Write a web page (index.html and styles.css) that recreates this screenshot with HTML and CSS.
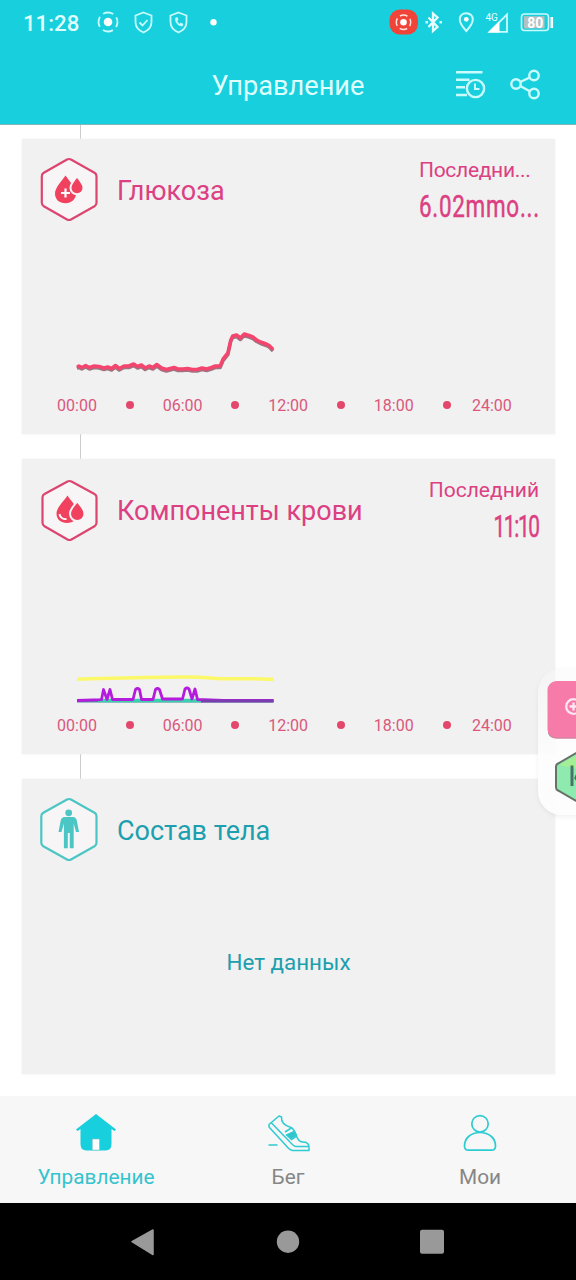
FILE: index.html
```html
<!DOCTYPE html>
<html lang="ru">
<head>
<meta charset="utf-8">
<title>Управление</title>
<link rel="stylesheet" href="styles.css">
</head>
<body>
<div class="screen">
  <header class="top">
    <div class="status">
      <span class="clock">11:28</span>
      <svg class="status-left" width="124" height="28" viewBox="96 8 124 28" fill="none" stroke="#c9fbff" stroke-width="1.8">
        <circle cx="108" cy="22" r="9.5" stroke-dasharray="10.500 4.420" stroke-dashoffset="5.250"/>
        <circle cx="108" cy="22" r="4.3" fill="#fff" stroke="none"/>
        <path d="M143.500 12.500 151.500 15.500V22c0 5-3.500 8.500-8 10.500-4.500-2-8-5.500-8-10.500V15.500Z"/>
        <path d="m139.500 22.500 3 3 5-5.500"/>
        <path d="M178.500 12.500 186.500 15.500V22c0 5-3.500 8.500-8 10.500-4.500-2-8-5.500-8-10.500V15.500Z"/>
        <path d="M175.500 18c-.5 4.500 2.500 8 7 8l.5-2-2.300-1-1.300 1c-1.300-.8-2-2-2.300-3.200l1-1-.7-2.300Z" fill="#c9fbff" stroke-width=".6"/>
        <circle cx="213.500" cy="22.300" r="3.200" fill="#fff" stroke="none"/>
      </svg>
      <svg class="status-right" width="170" height="32" viewBox="386 6 170 32" fill="none" stroke="#c9fbff" stroke-width="2">
        <rect x="389.500" y="9.500" width="28.500" height="25" rx="10.500" fill="#f04438" stroke="none"/>
        <circle cx="403.500" cy="22.300" r="7.200" stroke="#ffe4df" stroke-width="1.500" stroke-dasharray="7.800 3.510" stroke-dashoffset="3.900"/>
        <circle cx="403.500" cy="22.300" r="3.300" fill="#fff" stroke="none"/>
        <path d="m428.500 17.500 9 9.500-4.500 4V13.500l4.500 4-9 9.500" stroke="#e9ffff" stroke-width="2.300"/>
        <path d="M425.500 22.300h2.500M439.500 22.300h2.500" stroke-width="2.500"/>
        <path d="M466.300 13.200c-4 0-6.500 2.800-6.500 6.300 0 4.500 6.500 11.500 6.500 11.500s6.500-7 6.500-11.500c0-3.500-2.500-6.300-6.500-6.300Z"/>
        <circle cx="466.300" cy="19.300" r="2.400" fill="#fff" stroke="none"/>
        <path d="M489.500 31.800 507 14.500V31.800Z" stroke-width="1.800"/>
        <path d="M488 32.500 499.500 21V32.500Z" fill="#fff" stroke="none"/>
        <text class="net" x="485.500" y="20.500">4G</text>
        <rect x="521.500" y="14" width="27" height="16.500" rx="3" stroke-width="1.600"/>
        <rect x="524" y="16.200" width="20.500" height="12.200" fill="#b3c1c4" stroke="none"/>
        <path d="M551.800 17v11" stroke="#fff" stroke-width="2.600"/>
        <text class="battery" x="535.300" y="28.200">80</text>
      </svg>
    </div>
    <div class="appbar">
      <h1>Управление</h1>
      <svg class="appbar-icons" width="88" height="34" viewBox="454 68 88 34" fill="none" stroke="#c9fbff" stroke-width="2.400">
        <path d="M456 72.200h26.500M456 79.800h13.500M456 87.300h9M456 95h11"/>
        <circle cx="475.500" cy="88.500" r="8.600"/>
        <path d="M475 83.500v5.500h4.500" stroke-width="2"/>
        <circle cx="516" cy="84" r="4.700"/><circle cx="534" cy="75.500" r="4.700"/><circle cx="534" cy="93.500" r="4.700"/>
        <path d="m520.200 82 9.600-4.500M520.200 86l9.600 5.300"/>
      </svg>
    </div>
  </header>

  <main class="feed">
    <section class="card pink">
      <div class="card-head">
        <svg class="badge" width="60" height="66" viewBox="39 156 60 66">
          <path class="hex" d="M67 159.500q2-1 4 0l23.500 13.200q2 1.200 2 3.500v26.600q0 2.300-2 3.500L71 219.500q-2 1-4 0L43.800 206.300q-2-1.200-2-3.500V176.200q0-2.300 2-3.500Z"/>
          <path class="fill" d="M65.500 175.500c-3.500 5.500-10.500 12-10.500 18 0 6 4.500 9.800 10.500 9.800s10.500-4.500 10.500-9.800c0-6-7-12.500-10.500-18Z"/>
          <path class="fill outlined" d="M77 176c-2 3.500-6.500 7.500-6.500 11.800 0 4 3 6.500 6.500 6.500s6.500-2.500 6.500-6.500c0-4.300-4.500-8.300-6.500-11.800Z"/>
          <path d="M65.500 188.500v9M61 193h9" stroke="#fff" stroke-width="2.200"/>
        </svg>
        <h2>Глюкоза</h2>
        <div class="last start"><span class="last-label">Последни...</span><span class="last-value">6.02mmo...</span></div>
      </div>
      <svg class="chart" width="533" height="120" viewBox="22 270 533 120">
        <g transform="translate(77 0) scale(.961 1) translate(-77 0)">
        <path class="line shade" d="M77 368.500l2-1 3 1.500 4-2 4 2 5-1.500 5 .5 5 1.500 4-1 4 1.500 4-3 4 3 5-2.500 5 0 5-2 4 2.500 4-1.500 4 3 4-2 4 1.500 4-3 5 3.500 5 1.500 4-1 4-1 4 1.500 5 0 5-.5 5 1 5 0 5-1.500 5 1 5-1.500 4-1.500 5 0 3-7 5-6 3-13 2-4 4-1 4 3 4-4 5 1.500 4 1.500 4 3 4 2 6 2 3 1.500 4 4"/>
        <path class="line" d="M77 367l2-1 3 1.500 4-2 4 2 5-1.500 5 .5 5 1.500 4-1 4 1.500 4-3 4 3 5-2.500 5 0 5-2 4 2.500 4-1.500 4 3 4-2 4 1.500 4-3 5 3.500 5 1.500 4-1 4-1 4 1.500 5 0 5-.5 5 1 5 0 5-1.500 5 1 5-1.500 4-1.500 5 0 3-7 5-6 3-13 2-4 4-1 4 3 4-4 5 1.500 4 1.500 4 3 4 2 6 2 3 1.500 4 4"/>
        </g>
      </svg>
      <div class="axis"><span>00:00</span><i></i><span>06:00</span><i></i><span>12:00</span><i></i><span>18:00</span><i></i><span class="end">24:00</span></div>
    </section>

    <section class="card pink">
      <div class="card-head">
        <svg class="badge" width="60" height="66" viewBox="39 476 60 66">
          <path class="hex" d="M67.500 481.500q2-1 4 0L94.500 494q2 1 2 3.300v25.500q0 2.300-2 3.500L71.500 539.500q-2 1-4 0L44.500 526.300q-2-1.200-2-3.500V497.300q0-2.300 2-3.300Z"/>
          <path class="fill" d="M67.500 495.500c-3.500 5.500-11 12-11 18 0 6 4.500 9.500 10.500 9.500s11-3.500 11-9.500c0-6-7-12.500-10.500-18Z"/>
          <path class="fill outlined" d="M77.300 501c-2.300 4-7.300 7.500-7.300 12.500 0 4.500 3.300 7.500 7.300 7.500s7.200-3 7.200-7.500c0-5-4.900-8.500-7.200-12.500Z"/>
          <path d="M59.500 514c.5 3.500 3.500 5.500 7 5" fill="none" stroke="#fff" stroke-width="1.800"/>
        </svg>
        <h2>Компоненты крови</h2>
        <div class="last"><span class="last-label">Последний</span><span class="last-value time">11:10</span></div>
      </div>
      <svg class="chart" width="533" height="120" viewBox="22 590 533 120">
        <path d="M77 679.200c30-.5 70-2.200 110-2.200 20 0 30 2.300 50 1.800s25 .5 36.500.5" fill="none" stroke="#fbf86a" stroke-width="3.500"/>
        <path d="M77 701h196.500" stroke="#4b8b9c" stroke-width="3"/>
        <path d="M98 700.500h103" stroke="#3ccfae" stroke-width="3.500"/>
        <path d="M77 700.500l24.500-.8 2-10.200 3.500 10 3-10 2.500 10H133l2.500-10q2-2 4 0l2 10H153l2.500-10q2-2 4 0l3 9.500h20l2.500-10q2-2 4 0l3 10 3-10 2.500 10.500 26 1 50 0" fill="none" stroke="#b51bdc" stroke-width="2.800" stroke-linejoin="round"/>
        <path d="M201 701h72.500" stroke="#7a3fae" stroke-width="2.800"/>
      </svg>
      <div class="axis"><span>00:00</span><i></i><span>06:00</span><i></i><span>12:00</span><i></i><span>18:00</span><i></i><span class="end">24:00</span></div>
    </section>

    <section class="card teal">
      <div class="card-head">
        <svg class="badge" width="60" height="66" viewBox="39 796 60 66">
          <path class="hex" d="M67 799.500q2-1 4 0l23.500 13.200q2 1.200 2 3.500v26.600q0 2.300-2 3.500L71 859.500q-2 1-4 0L43.300 846.300q-2-1.200-2-3.500V816.200q0-2.300 2-3.500Z"/>
          <circle class="fill" cx="68.700" cy="812.800" r="3.400"/>
          <path class="fill" d="M64.500 817h8.500q3 0 3.800 3.500l2.200 11.500h-3l-2.300-8.500v24.800h-3.900V833h-2v15.300h-3.900V823.500L61.500 832h-3l2.200-11.500Q61.500 817 64.500 817Z"/>
        </svg>
        <h2>Состав тела</h2>
      </div>
      <p class="empty">Нет данных</p>
    </section>
  </main>

  <nav class="tabs">
    <div class="tab active">
      <svg width="48" height="44" viewBox="72 1110 48 44">
        <path d="m96 1114 20 15.500-1.500 1.500-3-2V1144q0 6.500-6 6.500h-19q-6 0-6-6.500v-15l-3 2-1.500-1.500Z" fill="#18cfdd"/>
        <path d="M92.300 1139h7.200v11h-7.200Z" fill="#fff" stroke="#7fbcc2" stroke-width=".6"/>
      </svg>
      <span>Управление</span>
    </div>
    <div class="tab">
      <svg width="48" height="44" viewBox="264 1110 48 44" fill="none" stroke="#2dcbd2" stroke-width="1.500" stroke-linejoin="round">
        <path d="m269 1124.500 10-8.500 2.500 1c-.5 5.500 2.500 8.500 9.500 10.500 2.500 1 3.500 3.500 4.500 6.500 1 2.800 3 8 7 8 4 0 6.500 1 6.500 5v3.500h-16.500c-3-.5-5-3-7-5.500L269 1127Z"/>
        <path d="m271 1122.500 18 18.500c3 3 4.500 5.500 7 5.500h12.500M285 1132l7-4.500M289 1136.500l5.500-5.500M291 1140l6-4M268.500 1145h9"/>
        <path d="m286.500 1135 8-3.500 2 3.500-5.500 4Z" fill="#35c4ca"/>
      </svg>
      <span>Бег</span>
    </div>
    <div class="tab">
      <svg width="48" height="44" viewBox="456 1110 48 44" fill="none" stroke="#2dcbd2" stroke-width="1.700">
        <circle cx="480" cy="1123.800" r="8.200"/>
        <path d="M480 1132.500c-9 0-15.500 5.500-15.500 13.500 0 3 1 4.200 4 4.200h23c3 0 4-1.200 4-4.200 0-8-6.500-13.500-15.500-13.500Z"/>
      </svg>
      <span>Мои</span>
    </div>
  </nav>

  <footer class="system">
    <svg width="26" height="28" viewBox="130 1228 26 28"><path d="M152 1230v24.500L131 1241.700Z" fill="#999" stroke="#999" stroke-width="1.500" stroke-linejoin="round"/></svg>
    <svg width="26" height="28" viewBox="275 1228 26 28"><circle cx="288" cy="1241.700" r="11.200" fill="#999"/></svg>
    <svg width="26" height="28" viewBox="419 1228 26 28"><rect x="420" y="1229.700" width="24" height="24" rx="2" fill="#999"/></svg>
  </footer>

  <aside class="float">
    <svg width="38" height="147" viewBox="538 668 38 147">
      <rect x="547.500" y="681" width="58" height="57.500" rx="9" fill="#f67ba8"/>
      <path d="M548.500 733q2 5 8 5H576" fill="none" stroke="#c58a9f" stroke-width="1.200"/>
      <g fill="none" stroke="#ffe6f0" stroke-width="2.300"><circle cx="573.500" cy="706.500" r="7.300"/><path d="M573.500 702.500v8M569.500 706.500h8"/></g>
      <path d="M556 766.500q0-2 2-3L578 752v50l-20-11.500q-2-1-2-3Z" fill="#8feab0" stroke="#687068" stroke-width="2"/>
      <path d="M559 765l17-9.500v13Z" fill="#a4ef95"/>
      <path d="M572 765.500v20.500" stroke="#467466" stroke-width="3"/>
      <path d="M577 774l-2 4 2 3" stroke="#467466" stroke-width="1.500" fill="none"/>
    </svg>
  </aside>
</div>
</body>
</html>
```
FILE: styles.css
```css
* { box-sizing: border-box; margin: 0; padding: 0; }
body { font-family: Roboto, "Noto Sans", sans-serif; background: #fff; }
svg { display: block; flex: none; }
.screen { position: relative; width: 576px; height: 1280px; overflow: hidden; display: flex; flex-direction: column; }

.top { height: 125px; background: #18cfdd; border-bottom: 1px solid #82b5bc; color: #dfffff; }
.status { height: 44px; display: flex; align-items: center; padding: 0 20px 0 23px; }
.clock { width: 73px; font-size: 22.200px; font-weight: 500; line-height: 44px; padding-top: 2px; }
.status-right { margin-left: auto; }
.net { font: 10px Roboto, sans-serif; fill: #e9ffff; stroke: none; }
.battery { font: 700 14px Roboto, sans-serif; fill: #fff; stroke: none; text-anchor: middle; }
.appbar { height: 80px; display: grid; grid-template-columns: 1fr 153px 1fr; align-items: center; padding-top: 2px; }
.appbar h1 { grid-column: 2; font-size: 27.200px; font-weight: 400; line-height: 32px; padding-top: 2px; white-space: nowrap; }
.appbar-icons { justify-self: end; margin-right: 34px; margin-top: -1px; }

.feed { height: 971px; padding: 14px 21px 0 22px; display: flex; flex-direction: column; gap: 25px;
  background: linear-gradient(#ccc, #ccc) 80px 0 / 1px 700px no-repeat #fff; }
.card { height: 295px; background: #f1f1f1; box-shadow: 0 0 2px #eee; display: flex; flex-direction: column; flex: none; }
.card-head { height: 100px; display: flex; align-items: flex-start; padding: 17px 16px 0 17px; }
.pink { color: #dc4082; }
.teal { color: #1c9fae; }
.badge .hex { fill: #f7f5f6; stroke: currentColor; stroke-width: 2.200; }
.pink .badge { color: #dc4570; }
.teal .badge { color: #4cc6c4; }
.fill { fill: #f0415f; }
.teal .fill { fill: #4cc6c4; }
.outlined { stroke: #f7f5f6; stroke-width: 2; }
.card h2 { margin: 19px 0 0 18px; font-size: 27px; line-height: 32px; font-weight: 400; white-space: nowrap; }
.last { margin-left: auto; display: flex; flex-direction: column; align-items: flex-end; white-space: nowrap; }
.last.start { width: 120px; align-items: flex-start; }
.last-label { font-size: 21px; line-height: 26px; margin-top: 1px; }
.last.start .last-label { letter-spacing: -.3px; }
.last-value { font-size: 32px; line-height: 40px; margin-top: 3px; transform: scaleX(.7); transform-origin: right; -webkit-text-stroke: .5px; }
.last.start .last-value { transform-origin: left; letter-spacing: 1.050px; }
.last-value.time { letter-spacing: -2px; transform: scaleX(.65); margin-right: 0; }
.chart { height: 120px; margin-top: 31px; }
.line { fill: none; stroke: #f4456f; stroke-width: 3.600; stroke-linejoin: round; }
.shade { stroke: #9c7580; }
.axis { display: grid; grid-template-columns: repeat(9, 52.800px); justify-items: center; align-items: center; height: 30px; margin-left: 28.600px; font-size: 16px; color: #d9587c; }
.axis i { width: 8px; height: 8px; border-radius: 50%; background: #e3476c; }
.axis .end { margin-right: 15px; }
.empty { margin-top: 68px; text-align: center; font-size: 22.400px; line-height: 30px; }

.tabs { height: 107px; background: #f7f7f7; display: grid; grid-template-columns: repeat(3, 1fr); }
.tab { display: flex; flex-direction: column; align-items: center; padding-top: 14px; color: #868686; font-size: 20.800px; line-height: 26px; }
.tab span { margin-top: 10px; white-space: nowrap; }
.tab.active { color: #35c3cd; }
.system { flex: 1; background: #000; display: flex; justify-content: center; align-items: center; gap: 118px; padding-right: 1px; }

.float { position: absolute; left: 538px; top: 668px; width: 60px; height: 147px; border-radius: 24px;
  background: linear-gradient(rgba(247, 247, 247, .45), rgba(253, 253, 253, .95) 65%); box-shadow: 0 2px 5px rgba(0, 0, 0, .06); }
```
